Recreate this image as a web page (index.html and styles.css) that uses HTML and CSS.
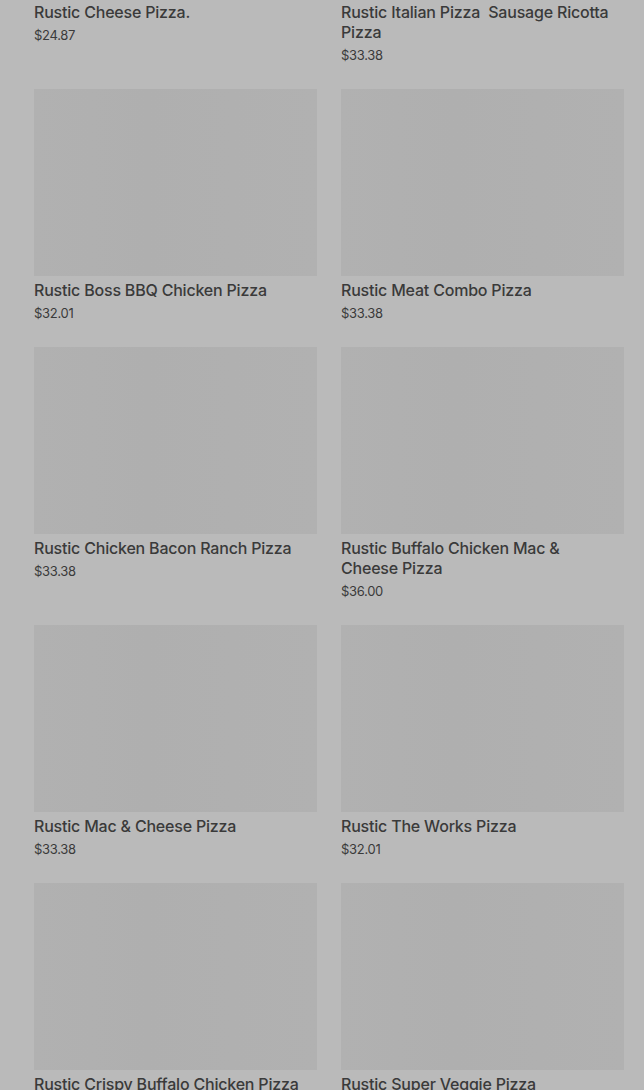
FILE: index.html
```html
<!DOCTYPE html>
<html lang="en">
<head>
<meta charset="utf-8">
<title>Rustic Pizzas</title>
<link rel="stylesheet" href="styles.css">
</head>
<body>
<main class="page">
  <div class="grid">
    <a class="card"><div class="thumb"></div><h3 class="name">Rustic Cheese Pizza.</h3><p class="price">$24.87</p></a>
    <a class="card"><div class="thumb"></div><h3 class="name">Rustic Italian Pizza&nbsp; Sausage Ricotta Pizza</h3><p class="price">$33.38</p></a>
    <a class="card"><div class="thumb"></div><h3 class="name">Rustic Boss BBQ Chicken Pizza</h3><p class="price">$32.01</p></a>
    <a class="card"><div class="thumb"></div><h3 class="name">Rustic Meat Combo Pizza</h3><p class="price">$33.38</p></a>
    <a class="card"><div class="thumb"></div><h3 class="name">Rustic Chicken Bacon Ranch Pizza</h3><p class="price">$33.38</p></a>
    <a class="card"><div class="thumb"></div><h3 class="name">Rustic Buffalo Chicken Mac &amp; Cheese Pizza</h3><p class="price">$36.00</p></a>
    <a class="card"><div class="thumb"></div><h3 class="name">Rustic Mac &amp; Cheese Pizza</h3><p class="price">$33.38</p></a>
    <a class="card"><div class="thumb"></div><h3 class="name">Rustic The Works Pizza</h3><p class="price">$32.01</p></a>
    <a class="card"><div class="thumb"></div><h3 class="name">Rustic Crispy Buffalo Chicken Pizza</h3><p class="price">$33.38</p></a>
    <a class="card"><div class="thumb"></div><h3 class="name">Rustic Super Veggie Pizza</h3><p class="price">$33.38</p></a>
  </div>
</main>
</body>
</html>
```
FILE: styles.css
```css
html, body {
  margin: 0;
  padding: 0;
  background: #bababa;
  overflow: hidden;
}
body {
  font-family: Inter, "Noto Sans", Roboto, sans-serif;
  color: #3a3a3a;
}
.page {
  padding: 0 20px 0 34px;
  margin-top: -189px;
}
.grid {
  display: grid;
  grid-template-columns: 283px 283px;
  column-gap: 24px;
  row-gap: 24px;
  align-items: start;
}
.card {
  display: block;
  text-decoration: none;
  color: inherit;
}
.thumb {
  height: 187px;
  background: linear-gradient(90deg, #b1b1b1 0%, #afafaf 40%, #b1b1b1 100%);
}
.name {
  margin: 4px 0 0;
  padding-right: 6px;
  font-size: 16px;
  line-height: 20px;
  font-weight: 500;
  letter-spacing: -0.2px;
}
.price {
  margin: 3px 0 0;
  font-size: 13px;
  line-height: 20px;
  font-weight: 400;
  letter-spacing: -0.3px;
}
```
